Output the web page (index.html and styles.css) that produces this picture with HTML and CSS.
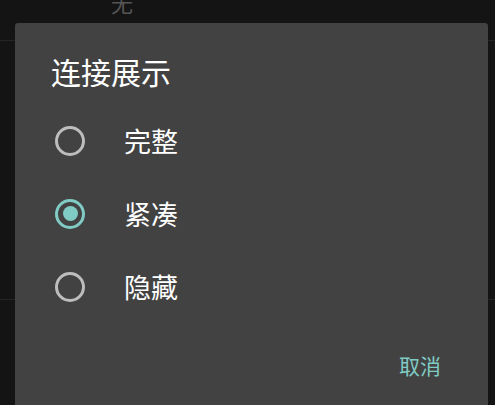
FILE: index.html
```html
<!DOCTYPE html>
<html lang="zh-CN">
<head>
    <meta charset="UTF-8">
    <meta name="viewport" content="width=device-width, initial-scale=1.0">
    <title>连接展示</title>
    <link rel="stylesheet" href="styles.css">
</head>
<body>
    <main class="settings">
        <div class="setting-row first">
            <span class="setting-value">无</span>
        </div>
        <div class="setting-row tall"></div>
    </main>

    <div class="dialog">
        <h2 class="dialog-title">连接展示</h2>
        <ul class="choice-list">
            <li class="choice">
                <span class="radio"></span>
                <span class="choice-label">完整</span>
            </li>
            <li class="choice">
                <span class="radio checked"></span>
                <span class="choice-label">紧凑</span>
            </li>
            <li class="choice">
                <span class="radio"></span>
                <span class="choice-label">隐藏</span>
            </li>
        </ul>
        <div class="dialog-actions">
            <button class="text-btn">取消</button>
        </div>
    </div>
</body>
</html>
```

FILE: styles.css
```css
html, body {
    height: 100%;
}
body {
    margin: 0;
    background: #141414;
    font-family: "Noto Sans CJK SC", "Noto Sans", sans-serif;
    overflow: hidden;
}
.settings {
    display: flex;
    flex-direction: column;
}
.setting-row {
    height: 40px;
    border-bottom: 1px solid #252525;
}
.setting-row.tall {
    height: 258px;
}
.setting-value {
    display: block;
    margin: -9px 0 0 111px;
    font-size: 22px;
    line-height: 22px;
    color: #555;
}
.dialog {
    position: absolute;
    left: 15px;
    top: 23px;
    bottom: 0;
    width: 473px;
    box-sizing: border-box;
    padding: 33px 47px 0 36px;
    background: #424242;
    border-radius: 3px 3px 0 0;
    display: flex;
    flex-direction: column;
}
.dialog-title {
    margin: 0;
    font-size: 30px;
    line-height: 30px;
    font-weight: normal;
    color: #fff;
}
.choice-list {
    list-style: none;
    margin: 18px 0 0;
    padding: 0;
}
.choice {
    height: 73px;
    display: flex;
    align-items: center;
    padding-left: 4px;
}
.radio {
    width: 30px;
    height: 30px;
    box-sizing: border-box;
    border: 3px solid #bdbdbd;
    border-radius: 50%;
    display: flex;
    align-items: center;
    justify-content: center;
}
.radio.checked {
    border-color: #80cbc4;
}
.radio.checked::after {
    content: "";
    width: 15px;
    height: 15px;
    border-radius: 50%;
    background: #80cbc4;
}
.choice-label {
    margin-left: 39px;
    font-size: 27px;
    line-height: 27px;
    color: #fff;
}
.dialog-actions {
    display: flex;
    justify-content: flex-end;
    margin-top: 32px;
}
.text-btn {
    background: none;
    border: none;
    padding: 0;
    font-family: inherit;
    font-size: 21px;
    line-height: 21px;
    color: #80cbc4;
}
```
